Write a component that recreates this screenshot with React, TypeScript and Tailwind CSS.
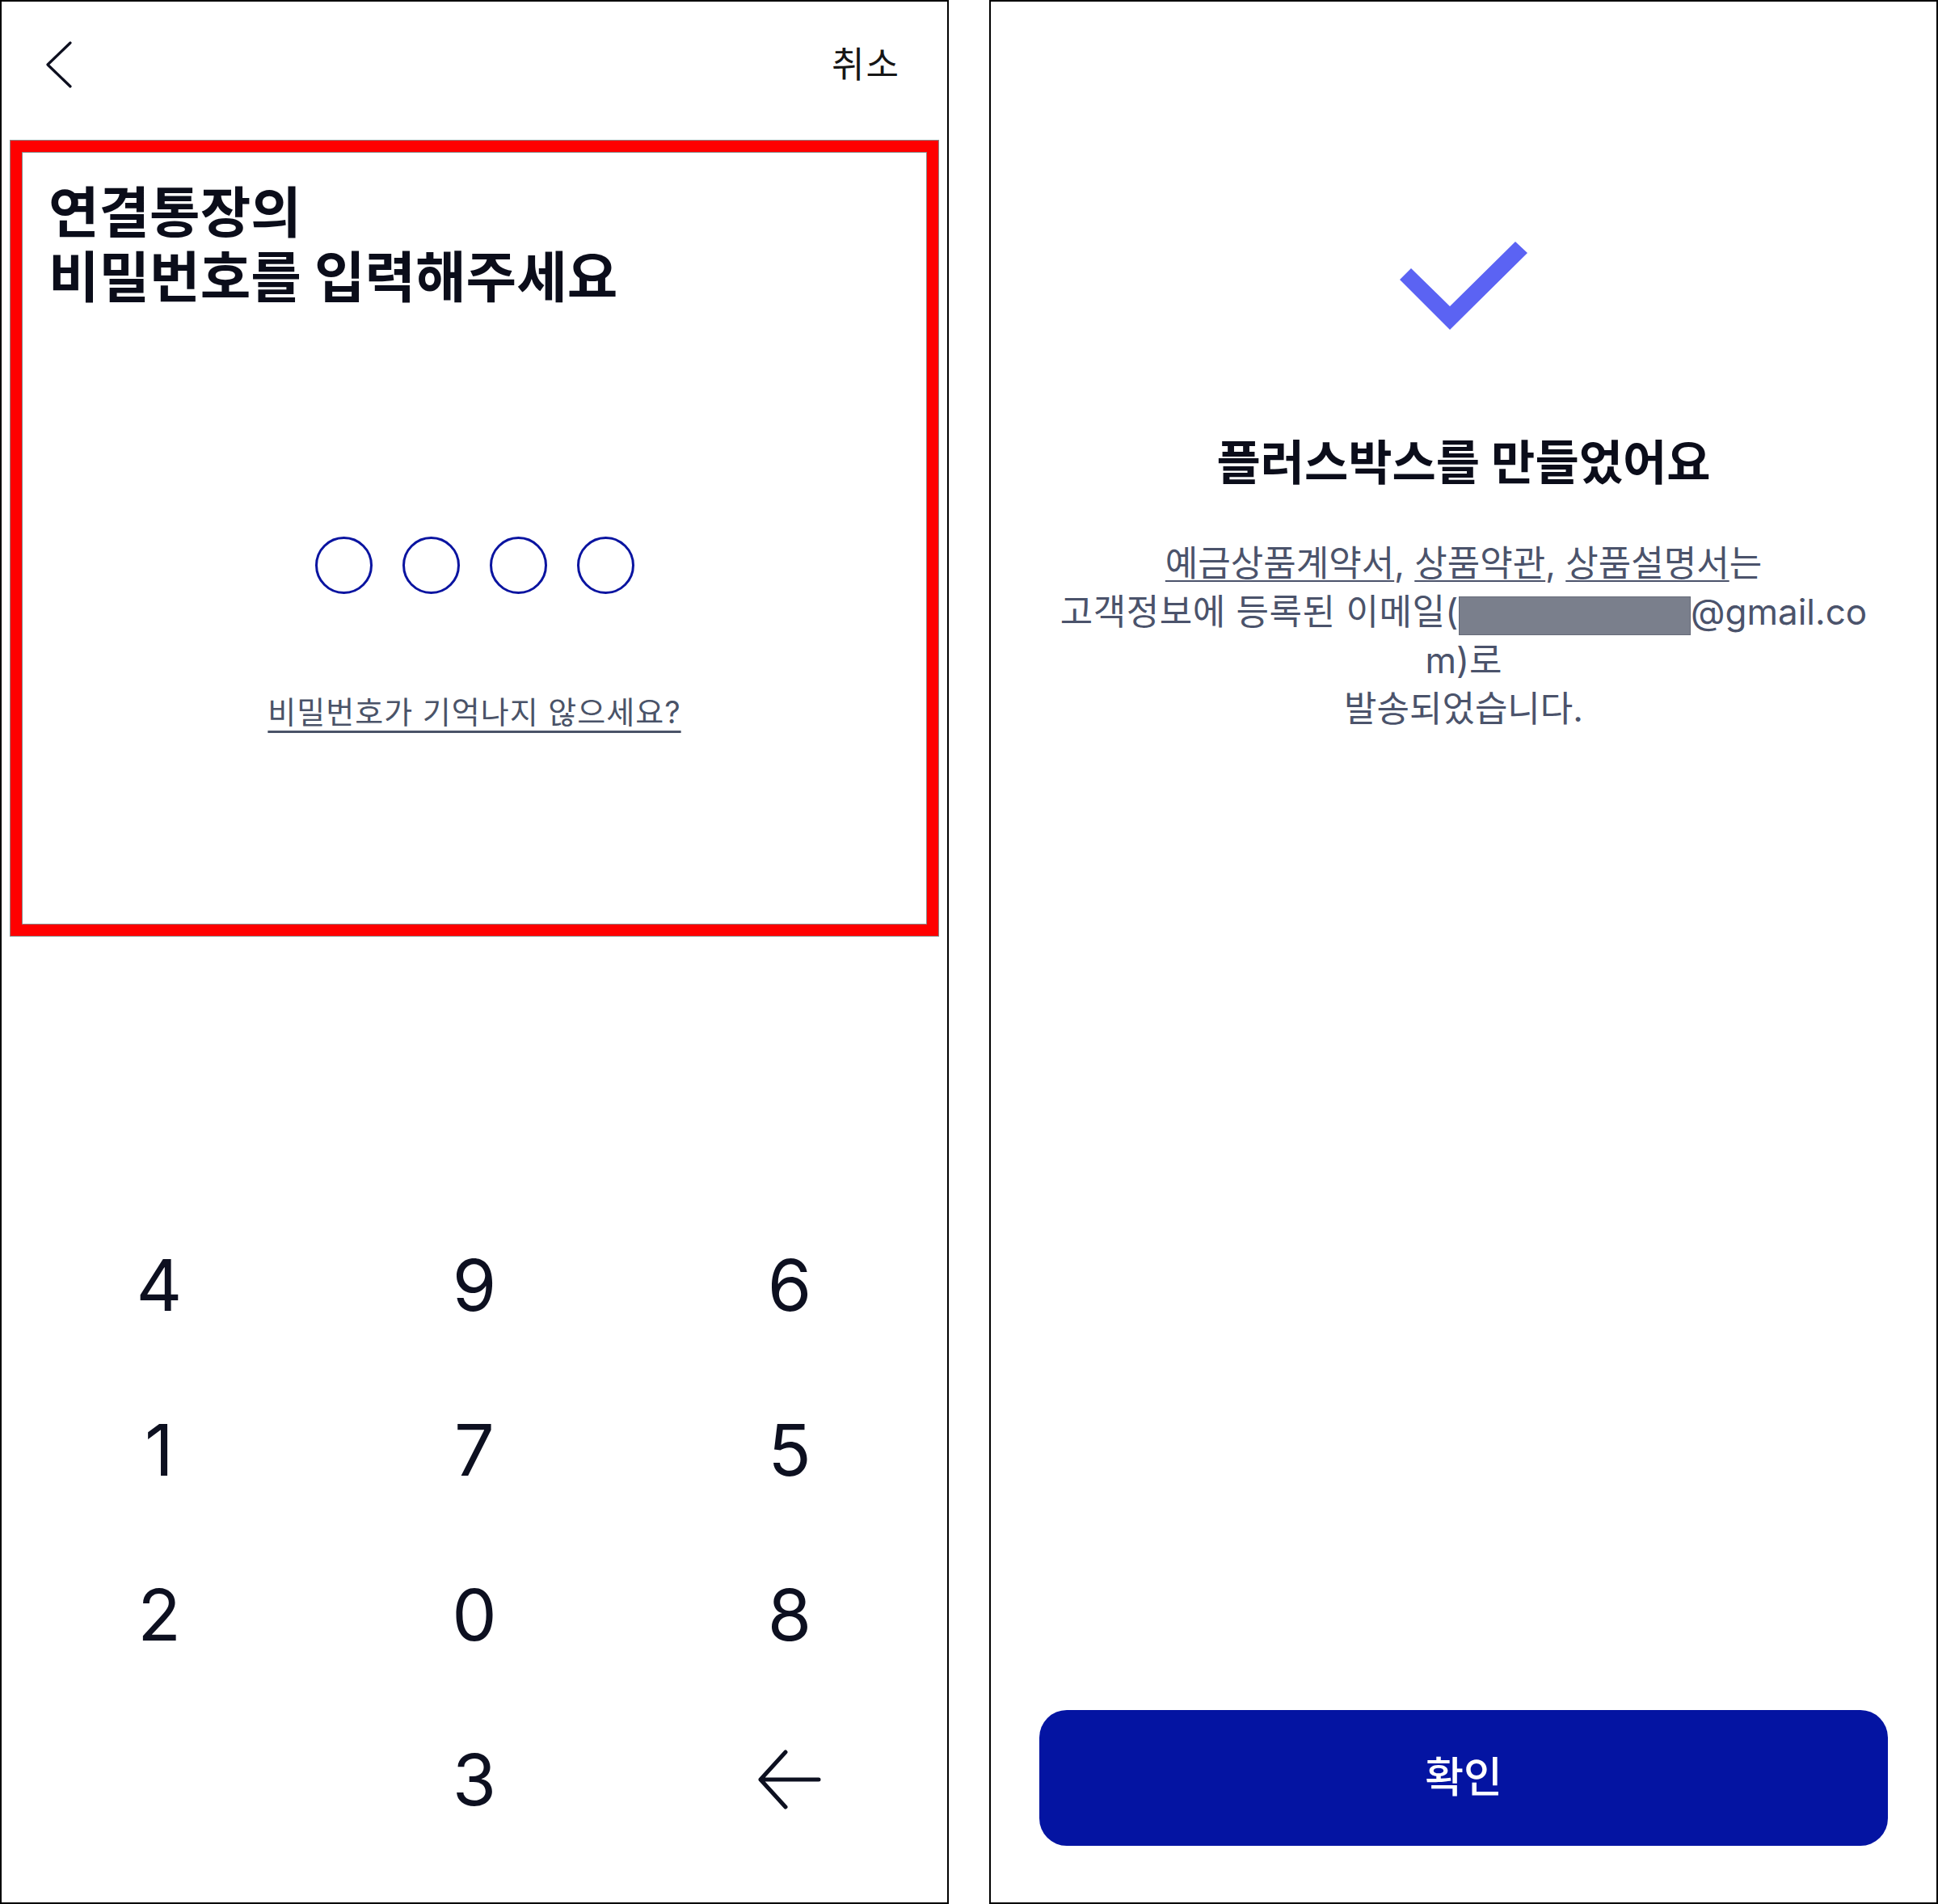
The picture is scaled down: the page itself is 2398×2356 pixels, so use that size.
const keys = ['4', '9', '6', '1', '7', '5', '2', '0', '8', '', '3', 'back']

function BackChevron() {
  return (
    <svg viewBox="0 0 34 58" className="h-[58px] w-[34px]" fill="none">
      <polyline
        points="31,2 3,29 31,56"
        stroke="#0d0f1f"
        strokeWidth="3.2"
        strokeLinecap="round"
        strokeLinejoin="round"
      />
    </svg>
  )
}

function BackspaceArrow() {
  return (
    <svg viewBox="0 0 80 74" className="h-[74px] w-[80px]" fill="none">
      <path
        d="M35 3 L4 37 L35 71 M4 37 H76"
        stroke="#0d1020"
        strokeWidth="5"
        strokeLinecap="round"
        strokeLinejoin="round"
      />
    </svg>
  )
}

function CheckMark() {
  return (
    <svg viewBox="0 0 162 113" className="h-[113px] w-[162px]">
      <polygon points="16,35 64,82 145,2 160,16 64,111 2,49" fill="#5b63f3" />
    </svg>
  )
}

function PinScreen() {
  return (
    <div className="flex h-full w-[1174px] flex-col border-2 border-black">
      <div className="flex h-[156px] items-center justify-between pl-[54px] pr-[58px]">
        <BackChevron />
        <span className="text-[44px] leading-none tracking-[2px] text-[#161616]">취소</span>
      </div>

      <div className="mx-[11px] mt-[16px] flex h-[984px] flex-col border-[14px] border-[#ff0000] shadow-[0_0_0_1px_#8a8a8a,inset_0_0_0_1px_#8a8a8a]">
        <h1 className="pl-[33px] pt-[35px] text-[68px] font-bold leading-[80px] text-[#0b0d1a]">
          연결통장의
          <br />
          비밀번호를 입력해주세요
        </h1>

        <div className="mt-[281px] flex justify-center gap-[37px]">
          {[0, 1, 2, 3].map((i) => (
            <div key={i} className="h-[71px] w-[71px] rounded-full border-[3px] border-[#0a14a0]" />
          ))}
        </div>

        <div className="mt-[122px] flex justify-center">
          <span className="text-[38px] leading-[48px] tracking-[1px] text-[#4a5368] underline decoration-[3px] underline-offset-[9px]">
            비밀번호가 기억나지 않으세요?
          </span>
        </div>
      </div>

      <div className="mt-[330px] grid grid-cols-3">
        {keys.map((k, i) => (
          <div key={i} className="flex h-[204px] items-center justify-center">
            {k === 'back' ? (
              <BackspaceArrow />
            ) : (
              <span className="text-[88px] font-normal leading-none text-[#0d1020]">{k}</span>
            )}
          </div>
        ))}
      </div>
    </div>
  )
}

function DoneScreen() {
  return (
    <div className="flex h-full w-[1174px] flex-col items-center border-2 border-black">
      <div className="mt-[295px]">
        <CheckMark />
      </div>

      <h2 className="mt-[123px] text-[59px] font-bold leading-[80px] text-[#0b0d1a]">
        플러스박스를 만들었어요
      </h2>

      <div className="mt-[54px] flex flex-col items-center text-[44px] leading-[60px] text-[#4b536b]">
        <p className="h-[60px]">
          <span className="underline decoration-2 underline-offset-[5px]">예금상품계약서</span>,{' '}
          <span className="underline decoration-2 underline-offset-[5px]">상품약관</span>,{' '}
          <span className="underline decoration-2 underline-offset-[5px]">상품설명서</span>는
        </p>
        <p className="flex h-[60px] items-center">
          <span className="tracking-[0.5px]">고객정보에 등록된 이메일(</span>
          <span className="mt-[10px] h-[48px] w-[287px] border border-[#666b78] bg-[#7a7f8c]" />
          <span>@gmail.co</span>
        </p>
        <p className="h-[60px]">m)로</p>
        <p className="h-[60px]">발송되었습니다.</p>
      </div>

      <button className="mx-[60px] mb-[70px] mt-auto flex h-[168px] w-[1050px] items-center justify-center rounded-[34px] bg-[#0414a2] text-[52px] font-medium text-white">
        확인
      </button>
    </div>
  )
}

export default function App() {
  return (
    <div className="flex h-[2356px] w-[2398px] gap-[50px] bg-white font-['Inter','Noto_Sans_CJK_KR',sans-serif]">
      <PinScreen />
      <DoneScreen />
    </div>
  )
}
